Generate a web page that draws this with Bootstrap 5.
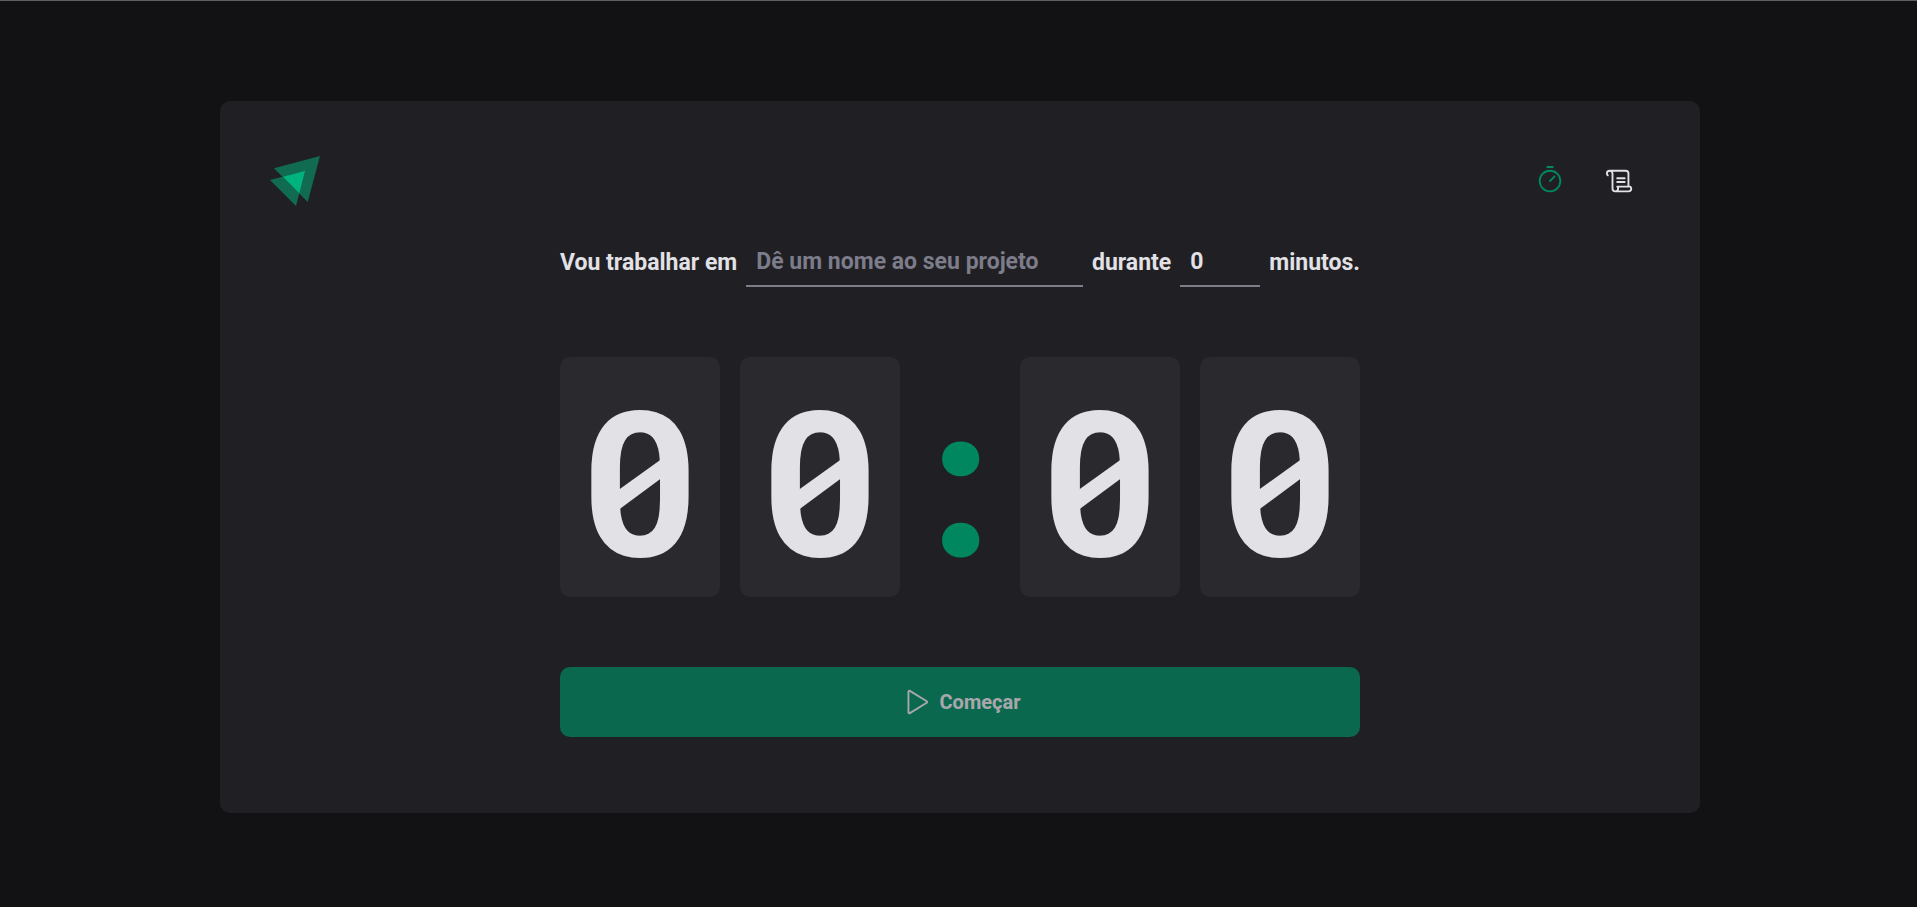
<!DOCTYPE html>
<html lang="pt-BR">
<head>
<meta charset="utf-8">
<meta name="viewport" content="width=device-width, initial-scale=1">
<title>Ignite Timer</title>
<link href="https://cdn.jsdelivr.net/npm/bootstrap@5.3.0/dist/css/bootstrap.min.css" rel="stylesheet">
<style>
  body {
    font-family: Roboto, sans-serif;
    background: #121214;
    color: #c4c4cc;
    border-top: 1px solid #5e5e5f;
    padding: 100px 16px 94px 19px;
  }
  .panel { max-width: 1480px; padding: 50px; background: #202024; border-radius: 10px; }
  .tabs { gap: 10px; }
  .tab-link { width: 60px; height: 60px; color: #e1e1e6; }
  .tab-link.active { color: #00875f; }
  .timer-form { width: 800px; max-width: 100%; gap: 70px; }
  .task-row { gap: 9px; font-size: 23px; font-weight: 700; line-height: 30px; color: #e1e1e6; }
  .task-row label, .task-row span { padding-top: 1px; }
  .line-input {
    height: 50px; min-width: 0; padding: 1px 10px 0;
    background: transparent; border: 0; border-bottom: 2px solid #7c7c8a; border-radius: 0;
    color: #e1e1e6; font-weight: 700; outline: 0;
  }
  .line-input::placeholder { color: #7c7c8a; opacity: 1; }
  .line-input:focus { border-color: #00875f; }
  .minutes { width: 80px; }
  .countdown { gap: 20px; font-weight: 700; font-size: 202px; line-height: 260px; }
  .digit { width: 160px; height: 240px; background: #29292e; border-radius: 10px; color: #e1e1e6; }
  .digit::after {
    content: ""; position: absolute; left: 57px; top: 101px; width: 46px; height: 53px;
    background: currentColor; clip-path: polygon(0 33px, 100% 0, 100% 19px, 0 100%);
  }
  .colon { width: 80px; height: 240px; padding-left: 2px; color: #00875f; line-height: 256px; -webkit-text-stroke: 5px #00875f; }
  .start { height: 70px; gap: 10px; border-radius: 10px; border: 0; background: #00875f; color: #e1e1e6; font-size: 20px; font-weight: 700; }
  .start:disabled { background: #00875f; color: #e1e1e6; opacity: .7; }
</style>
</head>
<body class="min-vh-100 d-flex flex-column align-items-center">
<div class="panel w-100 flex-grow-1 d-flex flex-column">
  <header class="d-flex justify-content-between align-items-center">
    <svg width="50" height="50" viewBox="0 0 50 50" role="img" aria-label="Logo">
      <path fill="#116b51" d="M4 12.3 50 0 37.7 46zM0 24 35 15 26 50z"/>
      <path fill="#00b37e" d="M13 20.7 35 15 29.3 37.3z"/>
    </svg>
    <nav class="tabs d-flex" aria-label="Principal">
      <a href="#" class="tab-link active d-flex align-items-center justify-content-center" title="Timer" aria-current="page">
        <svg width="30" height="30" viewBox="0 0 256 256" fill="none" stroke="currentColor" stroke-width="16" stroke-linecap="round">
          <circle cx="128" cy="128" r="88"/><path d="M128 128 167.6 88.4M104 8h48"/>
        </svg>
      </a>
      <a href="#" class="tab-link d-flex align-items-center justify-content-center" title="Histórico">
        <svg width="30" height="30" viewBox="0 0 256 256" fill="currentColor">
          <path d="M96,104a8,8,0,0,1,8-8h64a8,8,0,0,1,0,16H104A8,8,0,0,1,96,104Zm8,40h64a8,8,0,0,0,0-16H104a8,8,0,0,0,0,16Zm128,48a32,32,0,0,1-32,32H88a32,32,0,0,1-32-32V64a16,16,0,0,0-32,0c0,5.74,4.83,9.62,4.88,9.66h0A8,8,0,0,1,24,88a7.89,7.89,0,0,1-4.79-1.61h0C18.05,85.54,8,77.61,8,64A32,32,0,0,1,40,32H176a32,32,0,0,1,32,32V168h8a8,8,0,0,1,4.8,1.6C222,170.46,232,178.39,232,192ZM96.26,173.48A8.07,8.07,0,0,1,104,168h88V64a16,16,0,0,0-16-16H67.69A31.71,31.71,0,0,1,72,64V192a16,16,0,0,0,32,0c0-5.74-4.83-9.62-4.88-9.66A7.82,7.82,0,0,1,96.26,173.48ZM216,192a12.58,12.58,0,0,0-3.23-8h-94a26.92,26.92,0,0,1,1.21,8,31.82,31.82,0,0,1-4.29,16H200A16,16,0,0,0,216,192Z"/>
        </svg>
      </a>
    </nav>
  </header>
  <main class="flex-grow-1 d-flex align-items-center justify-content-center">
    <form class="timer-form d-flex flex-column">
      <div class="task-row d-flex align-items-center">
        <label for="task">Vou trabalhar em</label>
        <input id="task" class="line-input flex-fill" type="text" placeholder="Dê um nome ao seu projeto">
        <label for="minutes">durante</label>
        <input id="minutes" class="line-input minutes" type="text" inputmode="numeric" value="0">
        <span>minutos.</span>
      </div>
      <div class="countdown d-flex justify-content-between">
        <span class="digit position-relative text-center">0</span>
        <span class="digit position-relative text-center">0</span>
        <span class="colon d-flex justify-content-center">:</span>
        <span class="digit position-relative text-center">0</span>
        <span class="digit position-relative text-center">0</span>
      </div>
      <button class="start btn w-100 d-flex align-items-center justify-content-center" type="submit" disabled>
        <svg width="30" height="30" viewBox="0 0 256 256" fill="none" stroke="currentColor" stroke-width="16" stroke-linejoin="round">
          <path d="M72 39.9V216.1a8 8 0 0 0 12.2 6.7L228.2 134.7a7.8 7.8 0 0 0 0-13.4L84.2 33.2A8 8 0 0 0 72 39.9Z"/>
        </svg>
        Começar
      </button>
    </form>
  </main>
</div>
<script src="https://cdn.jsdelivr.net/npm/bootstrap@5.3.0/dist/js/bootstrap.bundle.min.js"></script>
</body>
</html>
